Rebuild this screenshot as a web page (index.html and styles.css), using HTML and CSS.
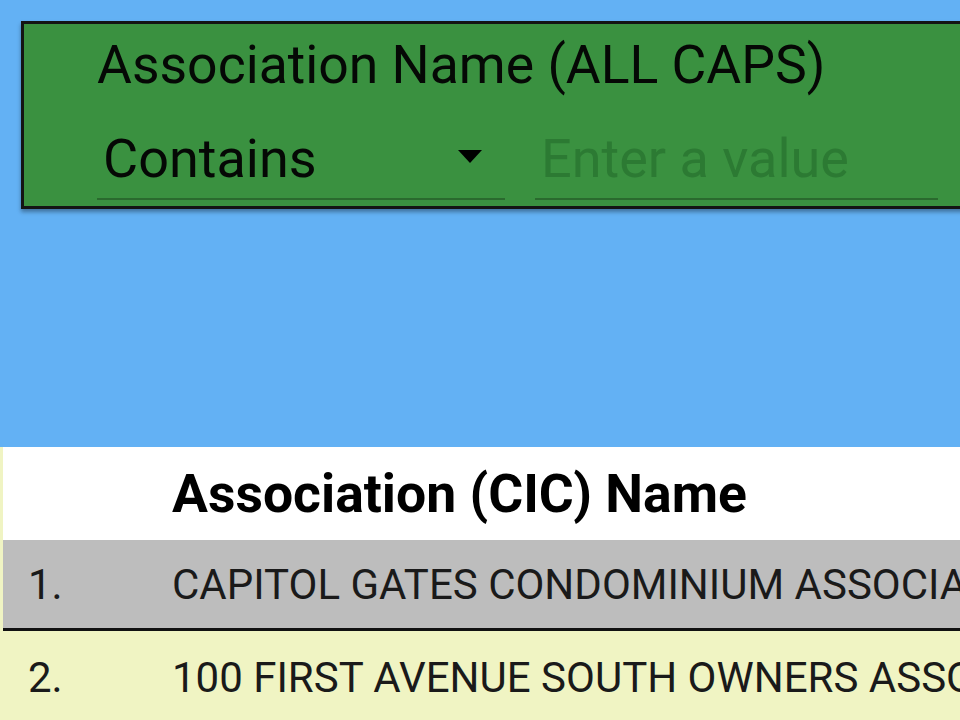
FILE: index.html
```html
<!DOCTYPE html>
<html>
<head>
<meta charset="utf-8">
<link rel="stylesheet" href="styles.css">
</head>
<body>
<div class="page">
  <div class="filter">
    <div class="filter-label">Association Name (ALL CAPS)</div>
    <div class="filter-row">
      <div class="select">
        <span class="select-text">Contains</span>
        <svg class="arrow" width="24" height="14" viewBox="0 0 24 14"><polygon points="0,0 24,0 12,13" fill="#000"/></svg>
      </div>
      <div class="input"><span class="placeholder">Enter a value</span></div>
    </div>
  </div>
  <div class="spacer"></div>
  <div class="table">
    <div class="row head">
      <div class="num"></div>
      <div class="name">Association (CIC) Name</div>
    </div>
    <div class="row odd">
      <div class="num">1.</div>
      <div class="name">CAPITOL GATES CONDOMINIUM ASSOCIATION</div>
    </div>
    <div class="row even">
      <div class="num">2.</div>
      <div class="name">100 FIRST AVENUE SOUTH OWNERS ASSOCIATION</div>
    </div>
  </div>
</div>
</body>
</html>
```
FILE: styles.css
```css
html, body {
  margin: 0;
  padding: 0;
  height: 100%;
  overflow: hidden;
}
body {
  background: #63b1f4;
  font-family: Roboto, "Liberation Sans", sans-serif;
  width: 960px;
}
.page {
  padding-top: 21px;
}
.filter {
  margin-left: 21px;
  width: 1000px;
  box-sizing: border-box;
  height: 188px;
  border: 3px solid #141414;
  background: #3a9140;
  box-shadow: 0 3px 4px rgba(0, 0, 0, 0.35);
  padding: 10px 0 0 73px;
}
.filter-label {
  font-size: 53.5px;
  line-height: 62px;
  color: #050805;
  white-space: nowrap;
}
.filter-row {
  display: flex;
  gap: 30px;
  margin-top: 31px;
}
.select {
  width: 408px;
  display: flex;
  align-items: center;
  justify-content: space-between;
  border-bottom: 2px solid #2a6a2e;
  padding: 0 23px 8px 6px;
  box-sizing: border-box;
}
.select-text {
  font-size: 54px;
  line-height: 63px;
  color: #050805;
}
.arrow {
  display: block;
  margin-top: -4px;
}
.input {
  width: 403px;
  border-bottom: 2px solid #2a6a2e;
  padding: 0 0 8px 6px;
  box-sizing: border-box;
}
.placeholder {
  font-size: 54px;
  line-height: 63px;
  color: #2c7a33;
}
.spacer {
  height: 238px;
}
.table {
  background: #f0f4c3;
  padding-left: 3px;
}
.row {
  display: flex;
  align-items: center;
  white-space: nowrap;
  overflow: hidden;
}
.num {
  width: 144px;
  padding-left: 25px;
  flex: none;
  font-size: 42px;
  color: #1a1a1a;
}
.name {
  font-size: 42px;
  color: #1a1a1a;
}
.head {
  height: 93px;
  background: #ffffff;
}
.head .name {
  font-size: 53.5px;
  font-weight: bold;
  color: #000;
}
.odd {
  height: 88px;
  background: #bdbdbd;
  border-bottom: 3px solid #111;
}
.even {
  height: 92px;
  background: #f0f4c3;
}
```
